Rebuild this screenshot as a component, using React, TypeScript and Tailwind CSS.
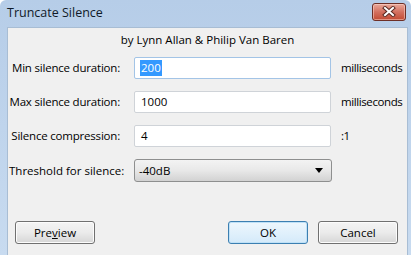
import React from "react";

const font = { fontFamily: '"Open Sans", "Noto Sans", Arial, sans-serif' };

function CloseButton() {
    return (
        <div className="flex h-[18px] w-[34px] items-center justify-center rounded-[3px] border border-[#6d2f26] bg-gradient-to-b from-[#e9a99b] via-[#d3705f] to-[#c24a32] shadow-[inset_0_0_0_1px_rgba(255,220,210,0.5)]">
            <svg width="14" height="11" viewBox="0 0 14 11">
                <path d="M3 2 L11 9 M11 2 L3 9" stroke="#5a2a22" strokeWidth="4" strokeLinecap="square" />
                <path d="M3 2 L11 9 M11 2 L3 9" stroke="#ffffff" strokeWidth="2" strokeLinecap="square" />
            </svg>
        </div>
    );
}

function TextRow({ label, value, unit, focused }: { label: string; value: string; unit: string; focused?: boolean }) {
    return (
        <div className="flex h-[22px] items-center whitespace-nowrap">
            <div className="flex w-[113px] justify-end pr-px">
                <span className="whitespace-nowrap tracking-[-0.2px]">{label}</span>
            </div>
            <div
                className={
                    "ml-[13px] flex h-[22px] w-[197px] shrink-0 items-center rounded-[2px] border bg-white pl-[5px] " +
                    (focused ? "border-[#a3c4e6]" : "border-[#cfd3d8]")
                }
            >
                {focused ? (
                    <span className="bg-[#3399ff] px-px leading-[16px] text-white">{value}</span>
                ) : (
                    <span className="px-px">{value}</span>
                )}
            </div>
            <div className="ml-[10px] tracking-[-0.4px]">{unit}</div>
        </div>
    );
}

function Button({ children, primary }: { children: React.ReactNode; primary?: boolean }) {
    return (
        <div
            className={
                "flex h-[23px] w-[80px] items-center justify-center rounded-[3px] border " +
                (primary
                    ? "border-[#3c7fb1] bg-gradient-to-b from-[#eef7fd] to-[#d4eafa] shadow-[inset_0_0_0_1px_#bfe1f7]"
                    : "border-[#707070] bg-gradient-to-b from-[#f4f4f4] via-[#ebebeb] to-[#d6d6d6] shadow-[inset_0_0_0_1px_#fcfcfc]")
            }
        >
            {children}
        </div>
    );
}

export default function App() {
    return (
        <div className="h-[255px] w-[411px] overflow-hidden text-[11.5px] text-black" style={font}>
            <div className="flex h-full flex-col rounded-t-[6px] bg-gradient-to-b from-[#b6cde8] to-[#c8dbf0] pl-[7px] pr-[3px]">
                {/* Title bar */}
                <div className="flex h-[27px] shrink-0 items-center justify-between">
                    <span className="text-[12.5px] text-[#101a28]">Truncate Silence</span>
                    <div className="mb-[4px] mr-[2px]">
                        <CloseButton />
                    </div>
                </div>

                {/* Client area */}
                <div className="flex flex-1 flex-col border-l border-t border-r border-[#a8bdd4] bg-[#f0f0f0]">
                    <div className="mt-[4px] text-center leading-[16px]">by Lynn Allan &amp; Philip Van Baren</div>

                    <div className="mt-[9px] flex flex-col gap-[12px]">
                        <TextRow label="Min silence duration:" value="200" unit="milliseconds" focused />
                        <TextRow label="Max silence duration:" value="1000" unit="milliseconds" />
                        <TextRow label="Silence compression:" value="4" unit=":1" />
                    </div>

                    <div className="mt-[12px] flex h-[23px] items-center">
                        <div className="w-[126px] whitespace-nowrap pl-px">Threshold for silence:</div>
                        <div className="flex h-[23px] w-[198px] items-center justify-between rounded-[3px] border border-[#8e8f8f] bg-gradient-to-b from-[#f3f3f3] via-[#e8e8e8] to-[#d2d2d2] pl-[4px] pr-[8px]">
                            <span>-40dB</span>
                            <svg width="8" height="5" viewBox="0 0 8 5">
                                <path d="M0 0 H8 L4 5 Z" fill="#000" />
                            </svg>
                        </div>
                    </div>

                    <div className="mt-[39px] flex items-center pl-[7px] pr-[9px]">
                        <Button>
                            Pre<span className="underline">v</span>iew
                        </Button>
                        <div className="flex-1" />
                        <Button primary>OK</Button>
                        <div className="w-[10px]" />
                        <Button>Cancel</Button>
                    </div>
                </div>
            </div>
        </div>
    );
}
